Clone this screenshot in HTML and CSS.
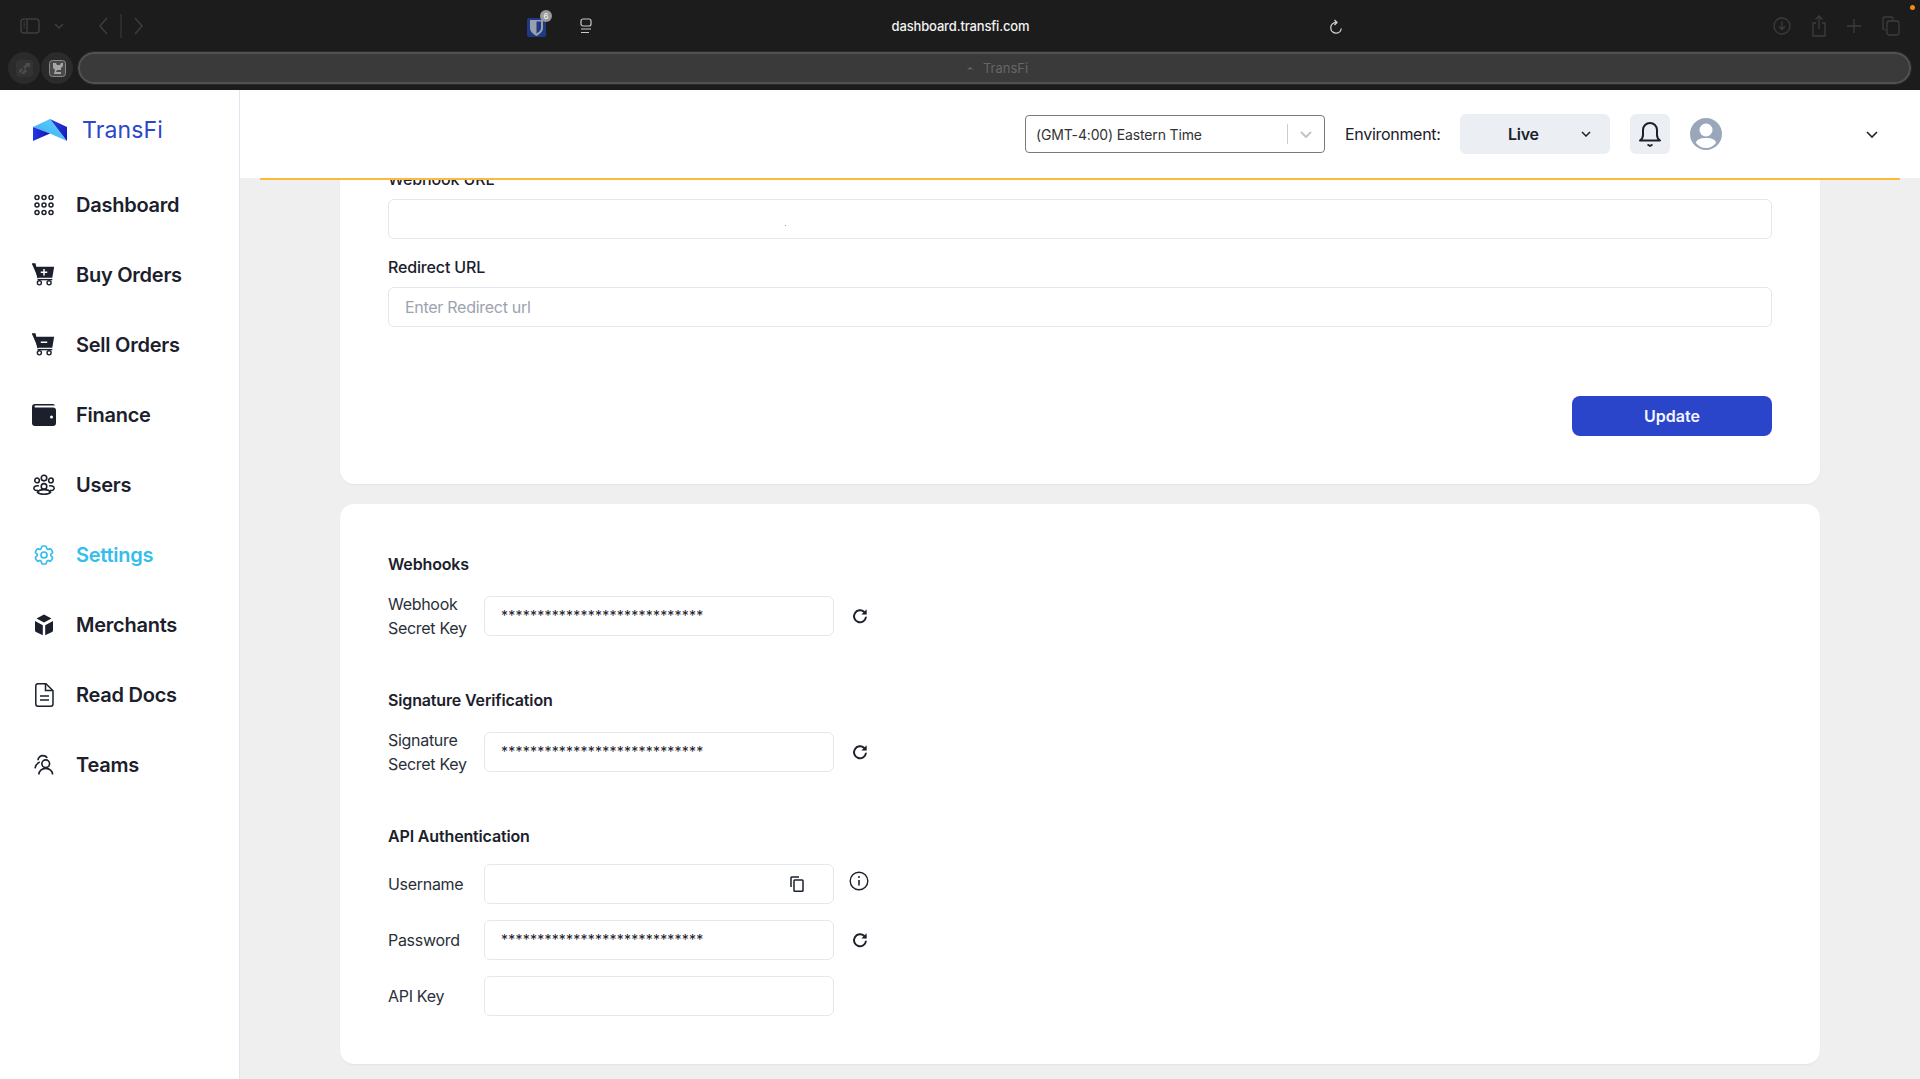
FILE: index.html
```html
<!DOCTYPE html>
<html lang="en">
<head>
<meta charset="utf-8">
<title>TransFi</title>
<link rel="stylesheet" href="styles.css">
</head>
<body>
<div class="chrome">
  <div class="chrome-top">
    <div class="chrome-left">
      <svg class="ci" width="20" height="16" viewBox="0 0 20 16" fill="none" stroke="#3d3d3d" stroke-width="1.5"><rect x="1" y="1" width="18" height="14" rx="3"/><path d="M7 1v14M3.5 4.500h1.500M3.500 7h1.500M3.500 9.500h1.500"/></svg>
      <svg class="chev-small" width="10" height="6" viewBox="0 0 10 6" fill="none" stroke="#3d3d3d" stroke-width="1.500"><path d="M1 1l4 4 4-4"/></svg>
      <svg class="nav-arrows" width="46" height="24" viewBox="0 0 46 24" fill="none" stroke="#3d3d3d" stroke-width="1.500"><path d="M9 4l-7 8 7 8M37 4l7 8-7 8"/><path d="M23 0v24" stroke-width="1"/></svg>
    </div>
    <div class="chrome-ext">
      <span class="shield"><svg width="19" height="19" viewBox="0 0 19 19"><rect width="19" height="19" rx="2" fill="#1f3a85"/><path d="M3 2h13v8c0 4-4 6.500-6.500 8C7 16.500 3 14 3 10z" fill="#9aa0ac"/><path d="M9.500 3.500h4.500v6.500c0 2.500-2.500 4.500-4.500 5.500z" fill="#1f3a85"/></svg><b class="shield-badge">6</b></span>
      <svg width="12" height="16" viewBox="0 0 12 16" fill="none" stroke="#c8c8c8" stroke-width="1.200"><rect x="1" y="1" width="10" height="7" rx="2"/><path d="M1 11h10M1 14.500h8"/></svg>
    </div>
    <div class="chrome-url">dashboard.transfi.com</div>
    <svg class="reload" width="14" height="16" viewBox="0 0 14 16" fill="none" stroke="#d0d0d0" stroke-width="1.300"><path d="M7 3.500a5.300 5.300 0 1 0 5.300 6"/><path d="M5.500 1l2.500 2.500L5.500 6"/></svg>
    <div class="chrome-right">
      <svg width="18" height="18" viewBox="0 0 18 18" fill="none" stroke="#3d3d3d" stroke-width="1.300"><circle cx="9" cy="9" r="8"/><path d="M9 4.500v8M6 9.500l3 3 3-3"/></svg>
      <svg width="16" height="22" viewBox="0 0 16 22" fill="none" stroke="#3d3d3d" stroke-width="1.300"><path d="M5 8H2v13h12V8h-3M8 14V1M4.500 4.500L8 1l3.500 3.500"/></svg>
      <svg width="16" height="16" viewBox="0 0 16 16" fill="none" stroke="#3d3d3d" stroke-width="1.300"><path d="M8 1v14M1 8h14"/></svg>
      <svg width="18" height="20" viewBox="0 0 18 20" fill="none" stroke="#3d3d3d" stroke-width="1.300"><rect x="5" y="5" width="12" height="14" rx="2.500"/><path d="M3.500 14H3a2 2 0 0 1-2-2V3a2 2 0 0 1 2-2h6a2 2 0 0 1 2 2v1"/></svg>
    </div>
    <span class="rec-dot"></span>
  </div>
  <div class="chrome-bottom">
    <span class="pin"><svg width="17" height="17" viewBox="0 0 17 17"><rect width="17" height="17" rx="3" fill="#333"/><path d="M9 3h5v5l-2-2-3 3-2-2 3-3zM5 8l2 2-3 3H3v-2zM9 9l2 2-3 3H5z" fill="#4c4c4c"/></svg></span>
    <span class="pin"><svg width="17" height="17" viewBox="0 0 17 17"><rect x=".5" y=".5" width="16" height="16" rx="3" fill="#4a4a4a" stroke="#8a8a8a"/><path d="M4 3h3l1 2h3l1-2h2v3l-2 2v2H8l-1 2h5v2H5l1-4-2-2z" fill="#a6a6a6"/></svg></span>
    <div class="addr">
      <svg width="7" height="5" viewBox="0 0 7 5"><path d="M0 4l3-3 4 3-3-1z" fill="#6a6a6a"/></svg>
      <span>TransFi</span>
    </div>
  </div>
</div>

<div class="app">
  <aside class="side">
    <div class="brand">
      <svg width="34" height="22" viewBox="0 0 34 22">
        <defs>
          <linearGradient id="lg1" x1="0" y1="1" x2="1" y2="0"><stop offset="0" stop-color="#39a9f5"/><stop offset="1" stop-color="#5fd4fb"/></linearGradient>
          <linearGradient id="lg2" x1="0" y1="0" x2="1" y2="1"><stop offset="0" stop-color="#2a45e0"/><stop offset="1" stop-color="#1416b8"/></linearGradient>
          <linearGradient id="lg3" x1="0" y1="0" x2="1" y2="0"><stop offset="0" stop-color="#2238e6"/><stop offset="1" stop-color="#1414a8"/></linearGradient>
        </defs>
        <path d="M0 8L17 0l17 22-17-7.500z" fill="url(#lg1)"/>
        <path d="M17 0l17 8v14z" fill="url(#lg2)"/>
        <path d="M0 8l17 6.500L0 22z" fill="url(#lg3)"/>
      </svg>
      <span class="brand-name">TransFi</span>
    </div>
    <nav class="nav">
      <a class="nav-item">
        <svg class="nav-ico" viewBox="0 0 24 24" fill="none" stroke="currentColor" stroke-width="1.500"><circle cx="5" cy="4.500" r="2"/><circle cx="12" cy="4.500" r="2"/><circle cx="19" cy="4.500" r="2"/><circle cx="5" cy="12" r="2"/><circle cx="12" cy="12" r="2"/><circle cx="19" cy="12" r="2"/><circle cx="5" cy="19.500" r="2"/><circle cx="12" cy="19.500" r="2"/><circle cx="19" cy="19.500" r="2"/></svg>
        <span>Dashboard</span>
      </a>
      <a class="nav-item">
        <svg class="nav-ico" viewBox="0 0 26 24"><path d="M0 0h3.200l1 3H24l-2 12H6.500z" fill="currentColor"/><path d="M0 0h3.200l3.300 15.500" fill="none" stroke="currentColor" stroke-width="1.500"/><path d="M13 5.500v7M9.500 9h7" stroke="#fff" stroke-width="1.600" fill="none"/><path d="M6 17h16" stroke="currentColor" stroke-width="1.500"/><circle cx="8" cy="20.500" r="2.200" fill="none" stroke="currentColor" stroke-width="1.500"/><circle cx="18.500" cy="20.500" r="2.200" fill="none" stroke="currentColor" stroke-width="1.500"/></svg>
        <span>Buy Orders</span>
      </a>
      <a class="nav-item">
        <svg class="nav-ico" viewBox="0 0 26 24"><path d="M0 0h3.200l1 3H24l-2 12H6.500z" fill="currentColor"/><path d="M0 0h3.200l3.300 15.500" fill="none" stroke="currentColor" stroke-width="1.500"/><path d="M9.500 9h7" stroke="#fff" stroke-width="1.600" fill="none"/><path d="M6 17h16" stroke="currentColor" stroke-width="1.500"/><circle cx="8" cy="20.500" r="2.200" fill="none" stroke="currentColor" stroke-width="1.500"/><circle cx="18.500" cy="20.500" r="2.200" fill="none" stroke="currentColor" stroke-width="1.500"/></svg>
        <span>Sell Orders</span>
      </a>
      <a class="nav-item">
        <svg class="nav-ico" viewBox="0 0 24 24"><path d="M3 1h18a2.500 2.500 0 0 1 2 1.500H3.500a1 1 0 0 0 0 2H21a3 3 0 0 1 3 3V20a3 3 0 0 1-3 3H3a3 3 0 0 1-3-3V4a3 3 0 0 1 3-3z" fill="currentColor"/><circle cx="19.500" cy="14" r="1.500" fill="#fff"/></svg>
        <span>Finance</span>
      </a>
      <a class="nav-item">
        <svg class="nav-ico" viewBox="-1 -1 26 26" fill="none" stroke="currentColor" stroke-width="1.700"><circle cx="12" cy="4.500" r="3"/><circle cx="4.500" cy="7" r="2.500"/><circle cx="19.500" cy="7" r="2.500"/><circle cx="12" cy="13.500" r="3"/><path d="M6.500 13C3 12 1 14 1 15.500S3 18 5.500 18M17.500 13c3.500-1 5.500 1 5.500 2.500S21 18 18.500 18M5 20c1-2.500 4-3 7-3s6 .5 7 3c-1.500 1.500-4 2-7 2s-5.500-.5-7-2z"/></svg>
        <span>Users</span>
      </a>
      <a class="nav-item active">
        <svg class="nav-ico" viewBox="0 0 24 24" fill="none" stroke="currentColor" stroke-width="1.700"><path stroke-linejoin="round" d="M9.594 3.940c.09-.542.56-.94 1.110-.94h2.593c.55 0 1.020.398 1.110.94l.213 1.281c.063.374.313.686.645.870.074.040.147.083.220.127.324.196.720.257 1.075.124l1.217-.456a1.125 1.125 0 011.370.490l1.296 2.247a1.125 1.125 0 01-.260 1.431l-1.003.827c-.293.240-.438.613-.431.992a6.759 6.759 0 010 .255c-.007.378.138.750.430.990l1.005.828c.424.350.534.954.260 1.430l-1.298 2.247a1.125 1.125 0 01-1.369.491l-1.217-.456c-.355-.133-.750-.072-1.076.124a6.570 6.570 0 01-.220.128c-.331.183-.581.495-.644.869l-.213 1.280c-.09.543-.56.941-1.110.941h-2.594c-.55 0-1.020-.398-1.110-.940l-.213-1.281c-.062-.374-.312-.686-.644-.870a6.520 6.520 0 01-.220-.127c-.325-.196-.720-.257-1.076-.124l-1.217.456a1.125 1.125 0 01-1.369-.490l-1.297-2.247a1.125 1.125 0 01.260-1.431l1.004-.827c.292-.240.437-.613.430-.992a6.932 6.932 0 010-.255c.007-.378-.138-.750-.430-.990l-1.004-.828a1.125 1.125 0 01-.260-1.430l1.297-2.247a1.125 1.125 0 011.370-.491l1.216.456c.356.133.751.072 1.076-.124.072-.044.146-.087.220-.128.332-.183.582-.495.644-.869l.214-1.281z"/><circle cx="12" cy="12" r="3"/></svg>
        <span>Settings</span>
      </a>
      <a class="nav-item">
        <svg class="nav-ico" viewBox="0 0 24 24" fill="currentColor"><path d="M12 1.500l7.500 4L12 9.500l-7.500-4zM3 8l7.800 4.200v10L4 19A2 2 0 0 1 3 17.500zM21 8l-7.800 4.200v10L20 19a2 2 0 0 0 1-1.500z"/></svg>
        <span>Merchants</span>
      </a>
      <a class="nav-item">
        <svg class="nav-ico" viewBox="0 0 24 24" fill="none" stroke="currentColor" stroke-width="1.500"><path d="M6 .8h8l7 7V21a2.200 2.200 0 0 1-2.200 2.200H6A2.200 2.200 0 0 1 3.800 21V3A2.200 2.200 0 0 1 6 .8z" stroke-linejoin="round"/><path d="M13.500 1v6.500H21M8 13h9M8 17h9"/></svg>
        <span>Read Docs</span>
      </a>
      <a class="nav-item">
        <svg class="nav-ico" viewBox="-2 -2 28 28" fill="none" stroke="currentColor" stroke-width="1.900"><circle cx="14" cy="10.500" r="4.500"/><path d="M6 23c0-4 3.500-7 8-7s8 3 8 7M5 6.500C5 3 8 1 10.500 1S15 2 15.500 4M7 8.500C4 10 2 13 1.500 16"/></svg>
        <span>Teams</span>
      </a>
    </nav>
  </aside>

  <main class="main">
    <header class="top">
      <div class="tz">
        <span class="tz-val">(GMT-4:00) Eastern Time</span>
        <span class="tz-sep"></span>
        <svg class="tz-chev" width="12" height="7" viewBox="0 0 12 7" fill="none" stroke="#c4c4c4" stroke-width="2"><path d="M1 1l5 5 5-5"/></svg>
      </div>
      <span class="env-label">Environment:</span>
      <div class="env"><span class="env-val">Live</span><svg width="10" height="6" viewBox="0 0 10 6" fill="none" stroke="#1b202c" stroke-width="1.500"><path d="M1 1l4 4 4-4"/></svg></div>
      <div class="bell">
        <svg width="22" height="26" viewBox="0 0 22 26" fill="none" stroke="#1b202c" stroke-width="2"><path d="M1 19.500c2-1.500 3-3 3-5.500V9a7 7 0 0 1 14 0v5c0 2.500 1 4 3 5.500z" stroke-linejoin="round"/><path d="M8.500 23.500l2.500 1.500 2.500-1.500" stroke-width="1.800"/></svg>
      </div>
      <svg class="avatar" width="32" height="32" viewBox="0 0 32 32"><circle cx="16" cy="16" r="16" fill="#9aa7bb"/><circle cx="16" cy="12" r="6.500" fill="#fff"/><path d="M6 25c0-3 4-5 10-5s10 2 10 5c-2.500 3-6 5-10 5s-7.500-2-10-5z" fill="#fff"/></svg>
      <svg class="user-chev" width="12" height="7" viewBox="0 0 12 7" fill="none" stroke="#1b202c" stroke-width="1.600"><path d="M1 1l5 5 5-5"/></svg>
    </header>
    <div class="rule"></div>
    <div class="content">
      <section class="card card-form">
        <label class="f-label">Webhook URL</label>
        <div class="field field-wide"><span class="speck"></span></div>
        <label class="f-label">Redirect URL</label>
        <div class="field field-wide"><span class="ph">Enter Redirect url</span></div>
        <div class="actions"><button class="btn">Update</button></div>
      </section>
      <section class="card card-keys">
        <h3 class="k-title">Webhooks</h3>
        <div class="k-row">
          <label class="k-label">Webhook<br>Secret Key</label>
          <div class="field field-key"><span class="stars">****************************</span></div>
          <svg class="refresh" viewBox="0 0 24 24" fill="none" stroke="#1b202c" stroke-width="2.600"><path d="M20 13a8 8 0 1 1-2.400-6.400L20 9"/><path d="M20.800 3v7h-7" stroke-width="0" fill="#1b202c"/></svg>
        </div>
        <h3 class="k-title k-gap">Signature Verification</h3>
        <div class="k-row">
          <label class="k-label">Signature<br>Secret Key</label>
          <div class="field field-key"><span class="stars">****************************</span></div>
          <svg class="refresh" viewBox="0 0 24 24" fill="none" stroke="#1b202c" stroke-width="2.600"><path d="M20 13a8 8 0 1 1-2.400-6.400L20 9"/><path d="M20.800 3v7h-7" stroke-width="0" fill="#1b202c"/></svg>
        </div>
        <h3 class="k-title k-gap">API Authentication</h3>
        <div class="k-list">
          <div class="k-row">
            <label class="k-label">Username</label>
            <div class="field field-key field-copy">
              <svg width="14" height="16" viewBox="0 0 14 16" fill="none" stroke="#1b202c" stroke-width="1.500"><path d="M1 11V1.800A1 1 0 0 1 2 1h7"/><rect x="4" y="4" width="9" height="11.200" rx=".8"/></svg>
            </div>
            <svg class="info" width="20" height="20" viewBox="0 0 20 20" fill="none" stroke="#1b202c" stroke-width="1.400"><circle cx="10" cy="10" r="8.800"/><path d="M10 9v5.500" stroke-width="1.600"/><circle cx="10" cy="6" r="1" fill="#1b202c" stroke="none"/></svg>
          </div>
          <div class="k-row">
            <label class="k-label">Password</label>
            <div class="field field-key"><span class="stars">****************************</span></div>
            <svg class="refresh" viewBox="0 0 24 24" fill="none" stroke="#1b202c" stroke-width="2.600"><path d="M20 13a8 8 0 1 1-2.400-6.400L20 9"/><path d="M20.800 3v7h-7" stroke-width="0" fill="#1b202c"/></svg>
          </div>
          <div class="k-row">
            <label class="k-label">API Key</label>
            <div class="field field-key"></div>
          </div>
        </div>
      </section>
    </div>
  </main>
</div>
</body>
</html>
```
FILE: styles.css
```css
* { box-sizing: border-box; }
html, body { margin: 0; height: 100%; }
body {
  height: 1079px;
  overflow: hidden;
  display: flex;
  flex-direction: column;
  font-family: Inter, "Liberation Sans", sans-serif;
  color: #1b202c;
  background: #efefef;
}

/* browser chrome */
.chrome { height: 90px; background: #1c1c1c; flex: none; }
.chrome-top { height: 52px; display: flex; align-items: center; position: relative; }
.chrome-left { display: flex; align-items: center; padding-left: 20px; width: 527px; }
.chev-small { margin-left: 14px; }
.nav-arrows { margin-left: 34px; }
.chrome-ext { display: flex; align-items: center; gap: 34px; }
.shield { display: block; width: 19px; height: 19px; position: relative; margin-top: 2px; }
.shield svg { display: block; }
.shield-badge { position: absolute; right: -6px; top: -8px; width: 12px; height: 12px; border-radius: 50%; background: #9a9a9a; color: #eee; font-size: 8px; font-weight: 500; line-height: 12px; text-align: center; }
.chrome-url { position: absolute; left: 1px; right: 0; top: 0; line-height: 52px; text-align: center; color: #f2f2f2; font-size: 13px; font-weight: 500; letter-spacing: -.15px; }
.reload { position: absolute; left: 1329px; top: 19px; }
.chrome-right { position: absolute; left: 1773px; top: 15px; height: 22px; display: flex; align-items: center; gap: 19.5px; }
.rec-dot { position: absolute; right: 5px; top: 5px; width: 5px; height: 5px; border-radius: 50%; background: #f08a12; }
.chrome-bottom { height: 38px; display: flex; align-items: flex-start; padding-left: 8px; gap: 1px; }
.pin { width: 32px; height: 32px; border-radius: 50%; background: #2b2b2b; display: flex; align-items: center; justify-content: center; }
.addr { margin-left: 4px; width: 1833px; height: 32px; border-radius: 16px; background: #3a3a3a; border: 2px solid #525252; outline: 1px solid #2a2a2a; display: flex; align-items: center; justify-content: center; gap: 9px; color: #666; font-size: 13px; padding-left: 6px; }

/* layout */
.app { flex: 1; min-height: 0; display: flex; }
.side { width: 240px; flex: none; background: #fff; border-right: 1px solid #e2e5ee; }
.brand { height: 80px; display: flex; align-items: center; gap: 15px; padding-left: 33px; }
.brand-name { font-size: 23px; color: #2b47c9; letter-spacing: .15px; }
.nav { display: flex; flex-direction: column; }
.nav-item { height: 70px; display: flex; align-items: center; gap: 20px; padding-left: 32px; font-size: 20px; font-weight: 600; letter-spacing: -.25px; color: #1b202c; }
.nav-item.active { color: #35bdec; }
.nav-ico { width: 24px; height: 24px; flex: none; }

.main { flex: 1; min-width: 0; display: flex; flex-direction: column; }
.top { height: 88px; flex: none; background: #fff; display: flex; align-items: center; padding-left: 785px; position: relative; z-index: 1; }
.tz { width: 300px; height: 38px; border: 1px solid #7a7a7a; border-radius: 4px; display: flex; align-items: center; padding-left: 10px; }
.tz-val { font-size: 14px; letter-spacing: -.15px; color: #333; flex: 1; }
.tz-sep { width: 1px; height: 20px; background: #ccc; }
.tz-chev { margin: 0 12px; }
.env-label { margin-left: 20px; font-size: 16px; letter-spacing: -.3px; width: 115px; }
.env { width: 150px; height: 40px; border-radius: 6px; background: #ebeff3; display: flex; align-items: center; padding-left: 48px; gap: 41px; font-size: 16px; font-weight: 600; letter-spacing: -.25px; }
.env-val { width: 32px; }
.bell { width: 40px; height: 40px; margin-left: 20px; background: #ebeff3; border-radius: 6px; display: flex; align-items: center; justify-content: center; }
.avatar { margin-left: 20px; }
.user-chev { margin-left: 144px; }
.rule { height: 2px; flex: none; margin: 0 20px; background: #fbb93f; position: relative; z-index: 1; }

.content { flex: 1; min-height: 0; overflow: hidden; padding: 0 100px; display: flex; flex-direction: column; gap: 20px; }
.card { background: #fff; border-radius: 14px; box-shadow: 0 1px 2px rgba(0,0,0,.05); padding: 0 48px; flex: none; }
.card-form { margin-top: -13px; height: 317px; }
.card-keys { height: 560px; padding-top: 48px; }

.f-label { display: block; font-size: 16px; line-height: 24px; height: 24px; margin-bottom: 8px; font-weight: 500; letter-spacing: -.15px; }
.field { height: 40px; border: 1px solid #e2e8f0; border-radius: 6px; background: #fff; display: flex; align-items: center; position: relative; }
.field-wide { margin-bottom: 16px; padding-left: 16px; }
.speck { position: absolute; left: 396px; top: 25px; width: 1px; height: 1px; background: #999; }
.ph { color: #9ca3af; font-size: 16px; letter-spacing: -.28px; }
.actions { display: flex; justify-content: flex-end; margin-top: 69px; }
.btn { width: 200px; height: 40px; border: 0; border-radius: 8px; background: #2a45c9; color: #f4f6ff; font: 600 16px Inter, "Liberation Sans", sans-serif; }

.k-title { margin: 0; font-size: 16px; line-height: 24px; font-weight: 600; letter-spacing: -.15px; }
.k-gap { margin-top: 48px; }
.k-row { display: flex; align-items: center; margin-top: 16px; min-height: 40px; }
.k-list { display: flex; flex-direction: column; gap: 16px; margin-top: 16px; }
.k-list .k-row { margin-top: 0; }
.k-label { width: 96px; flex: none; font-size: 16px; line-height: 24px; letter-spacing: -.3px; color: #2a2f3a; }
.field-key { width: 350px; flex: none; padding-left: 16px; }
.stars { font-size: 14px; letter-spacing: .22px; position: relative; top: -1px; }
.field-copy { justify-content: flex-end; padding-right: 29px; }
.refresh { width: 18px; height: 18px; margin-left: 17px; }
.info { margin-left: 15px; position: relative; top: -3px; }
```
